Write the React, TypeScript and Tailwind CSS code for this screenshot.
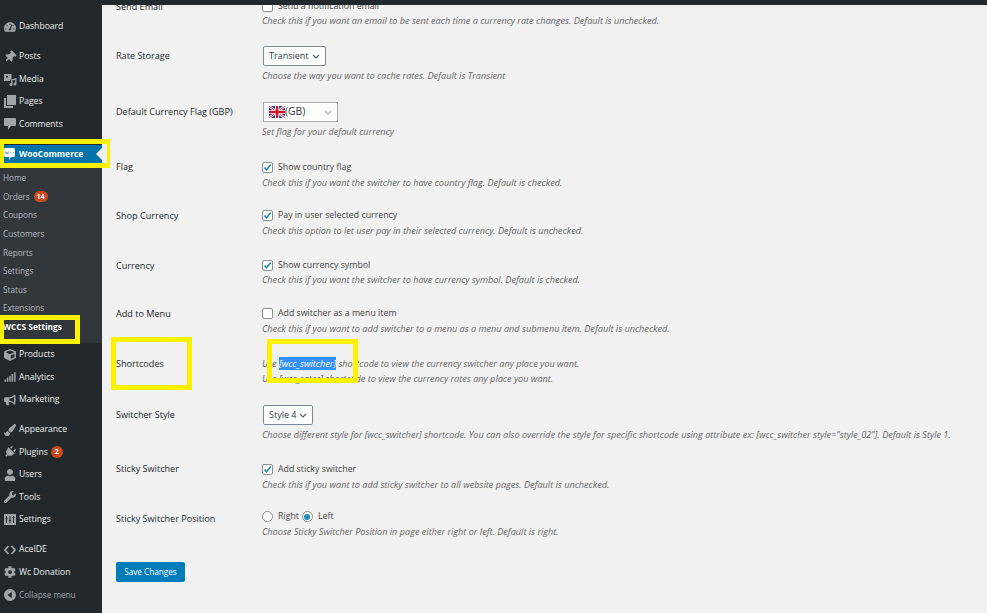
import type { ReactNode } from "react";
import {
  FaBullhorn,
  FaCog,
  FaCube,
  FaPaintBrush,
  FaPlug,
  FaSignal,
  FaThumbtack,
  FaTachometerAlt,
  FaUser,
  FaWrench,
} from "react-icons/fa";

function WooIcon() {
  return (
    <svg width="11" height="12" viewBox="0 0 11 12" className="ml-[4px]">
      <path d="M1.500 0h8A1.500 1.500 0 0 1 11 1.500v6A1.500 1.500 0 0 1 9.500 9H7l-2 3V9H1.500A1.500 1.500 0 0 1 0 7.500v-6A1.500 1.500 0 0 1 1.500 0z" fill="#fff" />
      <path d="M1.500 3.500l.7 2.500.8-1.800.8 1.800.7-2.500M6.500 4.700h1M9 4.700h1" stroke="#5d9cc0" strokeWidth="0.900" fill="none" />
    </svg>
  );
}

function MediaIcon() {
  return (
    <svg width="13" height="13" viewBox="0 0 13 13" fill="currentColor">
      <path d="M0 1h7.500v5.500H6V8H0zM2 3v1.500h2V3z" fillRule="evenodd" />
      <path d="M7 6.500l5.500-1.500v6a1.500 1.500 0 1 1-1.300-1.400V6.800L8.500 7.500v4a1.500 1.500 0 1 1-1.300-1.400z" />
    </svg>
  );
}

function PagesIcon() {
  return (
    <svg width="12" height="13" viewBox="0 0 12 13" fill="currentColor">
      <path d="M3 0h9v10H3z" />
      <path d="M0 3h2v8h7v2H0z" />
    </svg>
  );
}

function CommentIcon() {
  return (
    <svg width="12" height="12" viewBox="0 0 12 12" fill="currentColor">
      <path d="M1 0h10a1 1 0 0 1 1 1v6a1 1 0 0 1-1 1H7l-3 4V8H1a1 1 0 0 1-1-1V1a1 1 0 0 1 1-1z" />
    </svg>
  );
}

function SettingsIcon() {
  return (
    <svg width="12" height="11" viewBox="0 0 12 11" fill="currentColor">
      <path
        fillRule="evenodd"
        d="M0 0h12v11H0zM2 2v2H1.500v1H2v4h1V5h.5V4H3V2zM5.500 2v4H5v1h.5v2h1V7H7V6h-.5V2zM9 2v1h-.500v1H9v5h1V4h.5V3H10V2z"
      />
    </svg>
  );
}

function CodeIcon() {
  return (
    <svg width="12" height="10" viewBox="0 0 12 10" fill="none" stroke="currentColor" strokeWidth="1.800">
      <path d="M4.500 1L1 5l3.500 4M7.500 1L11 5 7.500 9" />
    </svg>
  );
}

function CollapseIcon() {
  return (
    <svg width="12" height="12" viewBox="0 0 12 12" fill="currentColor">
      <path fillRule="evenodd" d="M6 0a6 6 0 1 1 0 12A6 6 0 0 1 6 0zM7.800 2.800L3.500 6l4.300 3.200z" />
    </svg>
  );
}

function UkFlag() {
  return (
    <svg width="16" height="12" viewBox="0 0 16 12" className="shrink-0">
      <rect width="16" height="12" fill="#27408b" />
      <path d="M0 0l16 12M16 0L0 12" stroke="#fff" strokeWidth="2.400" />
      <path d="M0 0l16 12M16 0L0 12" stroke="#cf142b" strokeWidth="0.800" />
      <path d="M8 0v12M0 6h16" stroke="#fff" strokeWidth="4" />
      <path d="M8 0v12M0 6h16" stroke="#cf142b" strokeWidth="2.400" />
    </svg>
  );
}

function MenuItem({ icon, label, gap, badge }: { icon: ReactNode; label: string; gap?: boolean; badge?: string }) {
  return (
    <div className={`flex h-[22.500px] items-center text-[8.600px] font-medium text-[#eeeeee] ${gap ? "mt-[7.500px]" : ""}`}>
      <span className="flex w-[19px] justify-center pl-[1px] text-[12px] text-[#a0a5aa]">{icon}</span>
      <span>{label}</span>
      {badge && (
        <span className="ml-[3px] flex h-[12px] min-w-[12px] items-center justify-center rounded-full bg-[#ca4a1f] px-[3px] text-[7px] font-bold text-white">
          {badge}
        </span>
      )}
    </div>
  );
}

function SubItem({ label, badge, strong }: { label: string; badge?: string; strong?: boolean }) {
  return (
    <div className={`flex h-[18.600px] items-center pl-[3px] ${strong ? "text-[8.300px] font-bold text-white" : "text-[8.200px] text-[#b4b9be]"}`}>
      <span>{label}</span>
      {badge && (
        <span className="ml-[4px] flex h-[11px] min-w-[14px] items-center justify-center rounded-full bg-[#ca4a1f] px-[3px] text-[7px] font-bold text-white">
          {badge}
        </span>
      )}
    </div>
  );
}

function Sidebar() {
  return (
    <aside className="relative w-[102px] shrink-0 bg-[#23282d] pt-[15.500px]">
      <MenuItem icon={<FaTachometerAlt />} label="Dashboard" />
      <MenuItem gap icon={<FaThumbtack className="rotate-45" />} label="Posts" />
      <MenuItem icon={<MediaIcon />} label="Media" />
      <MenuItem icon={<PagesIcon />} label="Pages" />
      <MenuItem icon={<CommentIcon />} label="Comments" />
      <div className="mt-[9px] flex h-[19px] items-center justify-between bg-[#0073aa] text-[8.500px] font-bold text-white">
        <span className="flex items-center gap-[4px]">
          <WooIcon />
          <span>WooCommerce</span>
        </span>
        <span className="h-0 w-0 border-y-[6px] border-r-[6px] border-y-transparent border-r-[#f1f1f1]" />
      </div>
      <div className="h-[179px] bg-[#32373c] pt-[5.600px]">
        <SubItem label="Home" />
        <SubItem label="Orders" badge="14" />
        <SubItem label="Coupons" />
        <SubItem label="Customers" />
        <SubItem label="Reports" />
        <SubItem label="Settings" />
        <SubItem label="Status" />
        <SubItem label="Extensions" />
        <SubItem label="WCCS Settings" strong />
      </div>
      <div className="pt-[1px]">
        <MenuItem icon={<FaCube />} label="Products" />
        <MenuItem icon={<FaSignal />} label="Analytics" />
        <MenuItem icon={<FaBullhorn />} label="Marketing" />
        <MenuItem gap icon={<FaPaintBrush />} label="Appearance" />
        <MenuItem icon={<FaPlug className="rotate-45" />} label="Plugins" badge="2" />
        <MenuItem icon={<FaUser />} label="Users" />
        <MenuItem icon={<FaWrench />} label="Tools" />
        <MenuItem icon={<SettingsIcon />} label="Settings" />
        <MenuItem gap icon={<CodeIcon />} label="AceIDE" />
        <MenuItem icon={<FaCog />} label="Wc Donation" />
        <div className="flex h-[22.500px] items-center text-[8.200px] text-[#a0a5aa]">
          <span className="flex w-[19px] justify-center pl-[1px] text-[12px]">
            <CollapseIcon />
          </span>
          <span>Collapse menu</span>
        </div>
      </div>
    </aside>
  );
}

function Check({ on }: { on?: boolean }) {
  return (
    <span className="flex h-[11px] w-[11px] shrink-0 items-center justify-center rounded-[2px] border border-[#8c8f94] bg-white">
      {on && (
        <svg width="9" height="9" viewBox="0 0 9 9">
          <path d="M1.500 4.500l2 2.200L7.800 1.500" stroke="#1e8cbe" strokeWidth="1.600" fill="none" />
        </svg>
      )}
    </span>
  );
}

function Radio({ on }: { on?: boolean }) {
  return (
    <span className="flex h-[11px] w-[11px] shrink-0 items-center justify-center rounded-full border border-[#8c8f94] bg-white">
      {on && <span className="h-[6px] w-[6px] rounded-full bg-[#1e8cbe]" />}
    </span>
  );
}

function Chevron({ color }: { color: string }) {
  return (
    <svg width="8" height="5" viewBox="0 0 8 5" className="shrink-0">
      <path d="M1 1l3 3 3-3" stroke={color} strokeWidth="1.200" fill="none" />
    </svg>
  );
}

function SelectBox({ label }: { label: string }) {
  return (
    <div className="ml-[1px] flex h-[20px] w-fit items-center gap-[3px] rounded-[2px] border border-[#7e8993] bg-white px-[5px] text-[9px] text-[#32373c]">
      <span>{label}</span>
      <Chevron color="#555d66" />
    </div>
  );
}

function Desc({ children }: { children: ReactNode }) {
  return <p className="whitespace-nowrap text-[9.150px] leading-[15px] text-[#666666] italic">{children}</p>;
}

function Field({ h, label, labelClass, children }: { h: string; label: string; labelClass: string; children: ReactNode }) {
  return (
    <div className={`flex ${h}`}>
      <div className={`w-[146px] shrink-0 text-[9.100px] leading-[14px] text-[#23282d] ${labelClass}`}>{label}</div>
      <div>{children}</div>
    </div>
  );
}

function CheckLine({ on, text }: { on?: boolean; text: string }) {
  return (
    <label className="flex h-[15px] items-center gap-[5px] text-[8.800px] text-[#444444]">
      <Check on={on} />
      <span>{text}</span>
    </label>
  );
}

function SettingsForm() {
  return (
    <div className="pl-[14px]">
      <Field h="h-[46px]" label="Send Email" labelClass="pt-[0px]">
        <div className="-mt-[1px]">
          <CheckLine text="Send a notification email" />
        </div>
        <div className="-mt-[1px]">
          <Desc>Check this if you want an email to be sent each time a currency rate changes. Default is unchecked.</Desc>
        </div>
      </Field>
      <Field h="h-[56px]" label="Rate Storage" labelClass="pt-[3px]">
        <SelectBox label="Transient" />
        <div className="mt-[2px]">
          <Desc>Choose the way you want to cache rates. Default is Transient</Desc>
        </div>
      </Field>
      <Field h="h-[58px]" label="Default Currency Flag (GBP)" labelClass="pt-[3px]">
        <div className="ml-[1px] flex h-[20px] w-[75px] items-center justify-between border border-[#aaaaaa] bg-white px-[5px] text-[10.400px] text-[#32373c]">
          <span className="flex items-center">
            <UkFlag />
            (GB)
          </span>
          <Chevron color="#aaaaaa" />
        </div>
        <div className="mt-[2px]">
          <Desc>Set flag for your default currency</Desc>
        </div>
      </Field>
      <Field h="h-[48px]" label="Flag" labelClass="pt-[0px]">
        <CheckLine on text="Show country flag" />
        <Desc>Check this if you want the switcher to have country flag. Default is checked.</Desc>
      </Field>
      <Field h="h-[50px]" label="Shop Currency" labelClass="pt-[1px]">
        <CheckLine on text="Pay in user selected currency" />
        <Desc>Check this option to let user pay in their selected currency. Default is unchecked.</Desc>
      </Field>
      <Field h="h-[48px]" label="Currency" labelClass="pt-[1px]">
        <CheckLine on text="Show currency symbol" />
        <div className="-mt-[1px]">
          <Desc>Check this if you want the switcher to have currency symbol. Default is checked.</Desc>
        </div>
      </Field>
      <Field h="h-[52px]" label="Add to Menu" labelClass="pt-[1px]">
        <CheckLine text="Add switcher as a menu item" />
        <Desc>Check this if you want to add switcher to a menu as a menu and submenu item. Default is unchecked.</Desc>
      </Field>
      <Field h="h-[47px]" label="Shortcodes" labelClass="-mt-[1px]">
        <div className="-mt-[2px]">
          <Desc>
            Use <span className="bg-[#3390ff] text-white">[wcc_switcher]</span> shortcode to view the currency switcher any place you want.
          </Desc>
          <Desc>Use [wcc_rates] shortcode to view the currency rates any place you want.</Desc>
        </div>
      </Field>
      <Field h="h-[57px]" label="Switcher Style" labelClass="pt-[3px]">
        <SelectBox label="Style 4" />
        <div className="mt-[2px]">
          <Desc>
            Choose different style for [wcc_switcher] shortcode. You can also override the style for specific shortcode using attribute ex: [wcc_switcher style="style_02"]. Default is Style 1.
          </Desc>
        </div>
      </Field>
      <Field h="h-[47px]" label="Sticky Switcher" labelClass="pt-[0px]">
        <CheckLine on text="Add sticky switcher" />
        <Desc>Check this if you want to add sticky switcher to all website pages. Default is unchecked.</Desc>
      </Field>
      <Field h="h-[48px]" label="Sticky Switcher Position" labelClass="pt-[3px]">
        <div className="flex h-[15px] items-center text-[8.800px] text-[#444444]">
          <Radio />
          <span className="ml-[5px]">Right</span>
          <span className="ml-[3px]">
            <Radio on />
          </span>
          <span className="ml-[5px]">Left</span>
        </div>
        <Desc>Choose Sticky Switcher Position in page either right or left. Default is right.</Desc>
      </Field>
      <button className="h-[20px] w-[69px] rounded-[2px] bg-[#007cba] text-[8.200px] font-medium text-white">Save Changes</button>
    </div>
  );
}

export default function App() {
  return (
    <div className="relative flex h-[613px] w-[987px] overflow-hidden bg-[#f1f1f1] font-['Open_Sans',sans-serif]">
      <div className="absolute inset-x-0 top-0 z-10 h-[5px] bg-[#23282d]" />
      <Sidebar />
      <main className="flex-1">
        <SettingsForm />
      </main>
      {/* yellow annotation boxes */}
      <div className="absolute top-[139px] left-0 h-[29px] w-[110px] border-y-[5px] border-r-[3px] border-l-[4px] border-[#fff200]" />
      <div className="absolute top-[315px] left-0 h-[29px] w-[80px] border-[5px] border-l-[4px] border-[#fff200]" />
      <div className="absolute top-[337px] left-[111px] h-[53px] w-[81px] border-[5px] border-[#fff200]" />
      <div className="absolute top-[339px] left-[267px] h-[44px] w-[91px] border-[5px] border-[#fff200]" />
    </div>
  );
}
